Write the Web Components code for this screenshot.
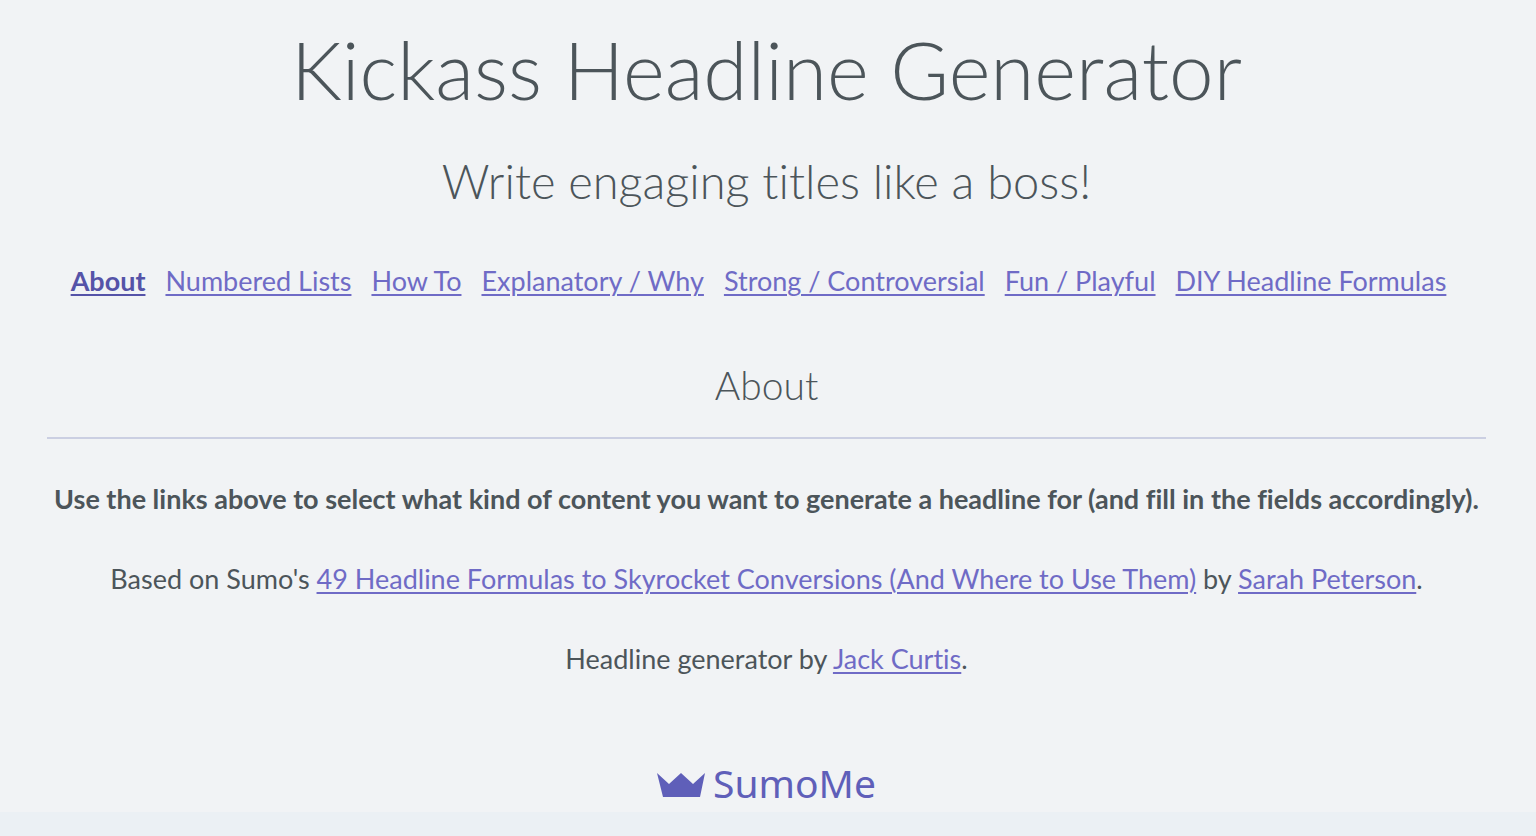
<!DOCTYPE html>
<html lang="en">
<head>
<meta charset="utf-8">
<meta name="viewport" content="width=device-width, initial-scale=1">
<title>Kickass Headline Generator</title>
<style>
  body {
    margin: 0;
    background: #f1f3f5;
    color: #4c555a;
    font-family: Lato, "Open Sans", sans-serif;
    font-size: 27px;
    line-height: 40px;
    font-variant-ligatures: none;
  }
</style>
</head>
<body>
<headline-app></headline-app>

<script>
class PageHeader extends HTMLElement {
  constructor() {
    super();
    this.attachShadow({ mode: 'open' });
  }

  connectedCallback() {
    this.shadowRoot.innerHTML = `
      <style>
        :host { display: block; text-align: center; }
        h1, p { margin: 0; font-weight: 300; }
        h1 { font-size: 80px; line-height: 104px; }
        p { font-size: 47px; line-height: 64px; margin-top: 28px; }
      </style>
      <h1><slot></slot></h1>
      <p><slot name="tagline"></slot></p>
    `;
  }
}

class TextLink extends HTMLElement {
  constructor() {
    super();
    this.attachShadow({ mode: 'open' });
  }

  connectedCallback() {
    const href = this.getAttribute('href') || '#';

    // no whitespace after the link, it would show before punctuation
    this.shadowRoot.innerHTML = `
      <style>
        :host { display: inline; }
        a {
          color: #6f6bc6;
          text-decoration: underline;
          text-decoration-thickness: 2px;
          text-underline-offset: 3px;
        }
        :host([active]) a { color: #5553a8; font-weight: 700; }
      </style><a href="${href}"><slot></slot></a>`;
  }
}

class CategoryNav extends HTMLElement {
  constructor() {
    super();
    this.attachShadow({ mode: 'open' });
  }

  connectedCallback() {
    this.shadowRoot.innerHTML = `
      <style>
        :host { display: block; }
        nav {
          display: flex;
          flex-wrap: wrap;
          justify-content: center;
          gap: 8px 20px;
          padding-right: 16px;
        }
      </style>
      <nav><slot></slot></nav>
    `;
  }
}

class ContentSection extends HTMLElement {
  constructor() {
    super();
    this.attachShadow({ mode: 'open' });
  }

  connectedCallback() {
    this.shadowRoot.innerHTML = `
      <style>
        :host { display: block; text-align: center; }
        h2 {
          margin: 0;
          padding-bottom: 28px;
          border-bottom: 2px solid #cbcfe2;
          font-size: 39px;
          font-weight: 300;
          line-height: 48px;
        }
        ::slotted(p) { margin: 40px 0 0; }
      </style>
      <section>
        <h2>${this.getAttribute('heading') || ''}</h2>
        <slot></slot>
      </section>
    `;
  }
}

class SumoLogo extends HTMLElement {
  constructor() {
    super();
    this.attachShadow({ mode: 'open' });
  }

  connectedCallback() {
    this.shadowRoot.innerHTML = `
      <style>
        :host { display: block; }
        a {
          display: flex;
          justify-content: center;
          align-items: center;
          gap: 8px;
          color: #5f5fb9;
          font-family: "Noto Sans", sans-serif;
          font-size: 39px;
          line-height: 48px;
          text-decoration: none;
        }
        svg { width: 48px; height: 25px; margin-top: 4px; }
      </style>
      <a href="#">
        <svg viewBox="0 0 48 25" fill="currentColor" aria-hidden="true">
          <path d="M0 0 12 11 24 0 36 11 48 0 43 24H6Z"/>
        </svg>
        <span>SumoMe</span>
      </a>
    `;
  }
}

class HeadlineApp extends HTMLElement {
  constructor() {
    super();
    this.attachShadow({ mode: 'open' });
  }

  connectedCallback() {
    this.shadowRoot.innerHTML = `
      <style>
        :host {
          display: flex;
          flex-direction: column;
          box-sizing: border-box;
          min-height: 100vh;
        }
        main { flex: 1; padding: 17px 50px 0 47px; }
        category-nav { margin-top: 48px; }
        content-section { margin-top: 60px; }
        sumo-logo { margin-top: 80px; }
        footer { height: 24px; background: #ebf0f4; }
      </style>
      <main>
        <page-header>
          Kickass Headline Generator
          <span slot="tagline">Write engaging titles like a boss!</span>
        </page-header>
        <category-nav>
          <text-link active>About</text-link>
          <text-link>Numbered Lists</text-link>
          <text-link>How To</text-link>
          <text-link>Explanatory / Why</text-link>
          <text-link>Strong / Controversial</text-link>
          <text-link>Fun / Playful</text-link>
          <text-link>DIY Headline Formulas</text-link>
        </category-nav>
        <content-section heading="About">
          <p><strong>Use the links above to select what kind of content you want to generate a headline for (and fill in the fields accordingly).</strong></p>
          <p>Based on Sumo's <text-link>49 Headline Formulas to Skyrocket Conversions (And Where to Use Them)</text-link> by <text-link>Sarah Peterson</text-link>.</p>
          <p>Headline generator by <text-link>Jack Curtis</text-link>.</p>
        </content-section>
        <sumo-logo></sumo-logo>
      </main>
      <footer></footer>
    `;
  }
}

customElements.define('page-header', PageHeader);
customElements.define('text-link', TextLink);
customElements.define('category-nav', CategoryNav);
customElements.define('content-section', ContentSection);
customElements.define('sumo-logo', SumoLogo);
customElements.define('headline-app', HeadlineApp);
</script>
</body>
</html>
